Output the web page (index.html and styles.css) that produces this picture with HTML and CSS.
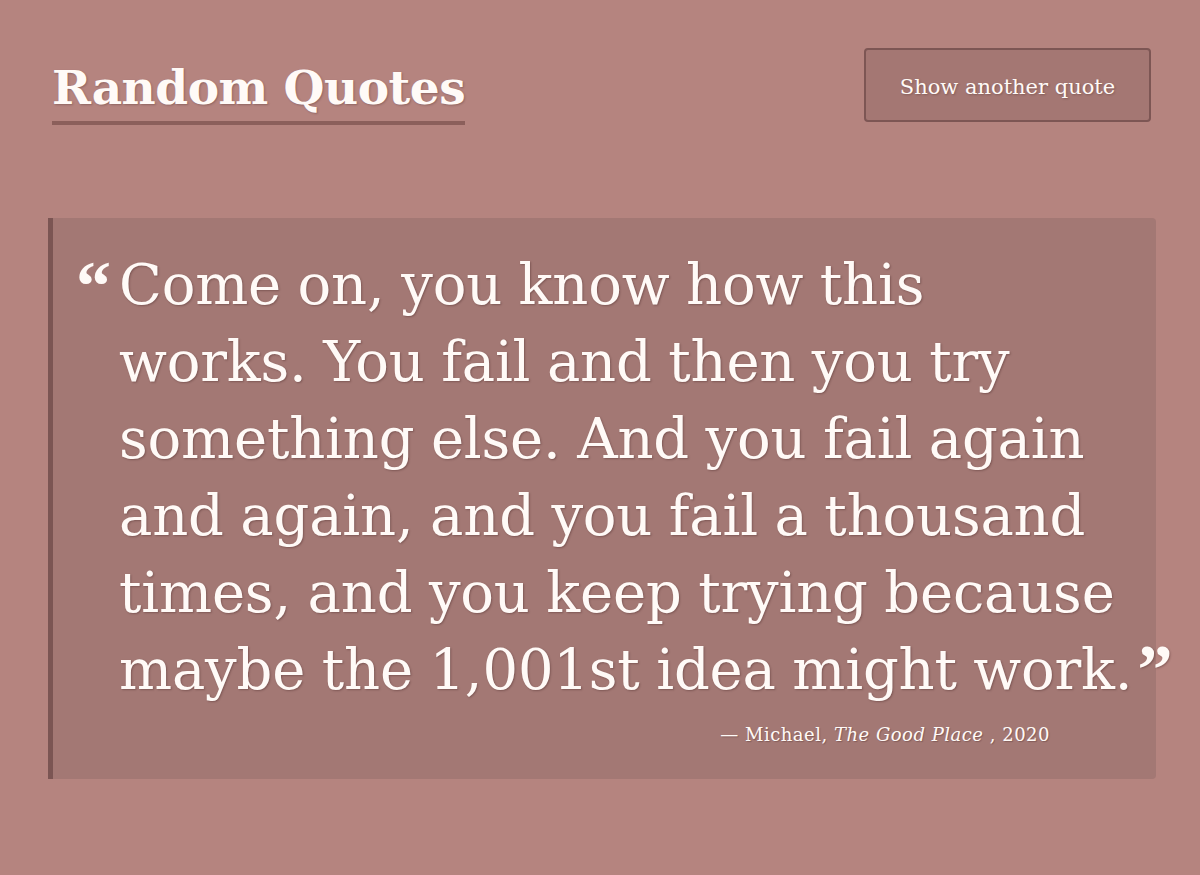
FILE: index.html
```html
<!DOCTYPE html>
<html lang="en">
<head>
<meta charset="utf-8">
<title>Random Quotes</title>
<link rel="stylesheet" href="styles.css">
</head>
<body>
<div class="page">
  <header class="header">
    <h1 class="title">Random Quotes</h1>
    <button class="btn" type="button">Show another quote</button>
  </header>
  <figure class="card">
    <blockquote class="quote">
      <span class="mark open">“</span>
      <p class="text">Come on, you know how this<br>works. You fail and then you try<br>something else. And you fail again<br>and again, and you fail a thousand<br>times, and you keep trying because<br>maybe the 1,001st idea might work.<span class="mark close">”</span></p>
    </blockquote>
    <figcaption class="cite">— Michael, <em>The Good Place</em> , 2020</figcaption>
  </figure>
</div>
</body>
</html>
```
FILE: styles.css
```css
html, body {
  margin: 0;
  padding: 0;
}
body {
  background: #b5847f;
  color: #fffaf7;
  font-family: "DejaVu Serif", "Liberation Serif", serif;
}
.page {
  padding: 48px 44px 0 48px;
}
.header {
  display: flex;
  justify-content: space-between;
  align-items: flex-start;
  padding: 0 5px 0 4px;
}
.title {
  margin: 10px 0 0 0;
  font-size: 47px;
  line-height: 60px;
  font-weight: bold;
  letter-spacing: -0.5px;
  border-bottom: 4px solid #8b5f5b;
  padding-bottom: 3px;
  text-shadow: 1px 1px 2px rgba(60, 30, 30, 0.3);
}
.btn {
  width: 287px;
  height: 74px;
  background: #a47773;
  border: 2px solid #7d5654;
  border-radius: 4px;
  color: #fffaf7;
  font-family: inherit;
  font-size: 21px;
  padding: 4px 0 0 0;
  text-shadow: 1px 1px 2px rgba(60, 30, 30, 0.3);
}
.card {
  margin: 93px 0 0 0;
  background: #a37874;
  border-left: 5px solid #7b5553;
  border-radius: 0 4px 4px 0;
  padding: 28px 0 34px 22px;
}
.quote {
  margin: 0;
  display: flex;
  align-items: flex-start;
}
.mark {
  font-family: "Liberation Serif", "DejaVu Serif", serif;
  font-weight: bold;
  font-size: 70px;
  line-height: 77px;
  letter-spacing: 0;
  word-spacing: 0;
}
.open {
  flex: 0 0 43px;
  margin-top: 1px;
  margin-left: 1px;
}
.close {
  line-height: 1;
  margin-left: 5px;
  vertical-align: -4px;
}
.text {
  margin: 0;
  white-space: nowrap;
  font-size: 56px;
  line-height: 77px;
  letter-spacing: -0.2px;
  word-spacing: -1px;
  text-shadow: 1px 1px 2px rgba(60, 30, 30, 0.35);
}
.cite {
  margin: 16px 106px 0 0;
  text-align: right;
  font-size: 18px;
  letter-spacing: 0.5px;
  text-shadow: 1px 1px 1px rgba(60, 30, 30, 0.3);
}
```
